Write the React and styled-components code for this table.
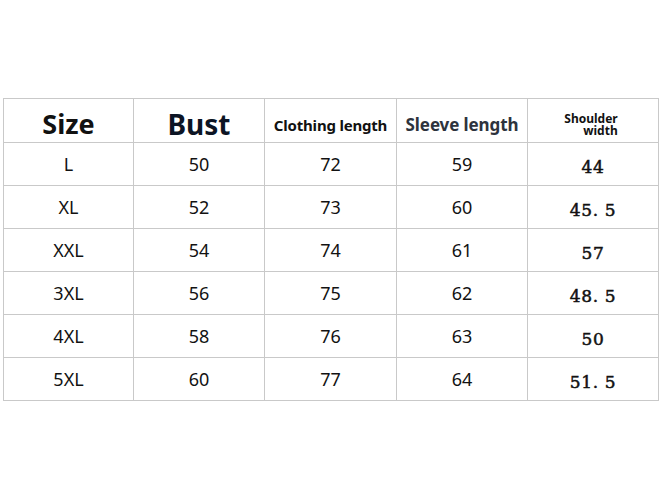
import styled, { createGlobalStyle } from 'styled-components';

const GlobalStyle = createGlobalStyle`
  html, body {
    margin: 0;
    padding: 0;
    background: #fff;
  }
  body {
    font-family: "Noto Sans", "Open Sans", sans-serif;
  }
`;

const Page = styled.div`
  width: 660px;
  height: 500px;
  padding: 98px 0 0 3px;
  box-sizing: border-box;
`;

const Table = styled.div`
  display: grid;
  grid-template-columns: 130px 131px 132px 131px 131px;
  grid-template-rows: 44px repeat(6, 43px);
  border-top: 1px solid #c9c9c9;
  border-left: 1px solid #c9c9c9;
  width: max-content;
`;

const Cell = styled.div`
  display: flex;
  align-items: center;
  justify-content: center;
  border-right: 1px solid #c9c9c9;
  border-bottom: 1px solid #c9c9c9;
  color: #121212;
  font-family: ${p => (p.$serif ? '"DejaVu Serif", "Liberation Serif", serif' : '"Noto Sans", "Open Sans", sans-serif')};
  font-size: ${p => (p.$serif ? '17px' : '18px')};
  font-weight: 400;
  -webkit-text-stroke: ${p => (p.$serif ? '0.5px #121212' : '0')};
  letter-spacing: ${p => (p.$serif ? '0.6px' : '0')};
  padding-top: ${p => (p.$serif ? '5px' : '0')};
  box-sizing: border-box;
  white-space: pre;
`;

const HeadCell = styled(Cell)`
  font-family: "Noto Sans", "Open Sans", sans-serif;
  font-weight: 700;
  font-size: ${p => p.$size};
  color: ${p => p.$color || '#111'};
  letter-spacing: ${p => p.$spacing || '0'};
  padding-top: ${p => p.$top || '0'};
`;

const Stack = styled.div`
  display: flex;
  flex-direction: column;
  align-items: flex-end;
  font-size: 12px;
  font-weight: 700;
  margin-left: -4px;
`;

const Line = styled.span`
  display: block;
  height: 12px;
  line-height: 12px;
`;

const rows = [
  ['L', '50', '72', '59', '44'],
  ['XL', '52', '73', '60', '45. 5'],
  ['XXL', '54', '74', '61', '57'],
  ['3XL', '56', '75', '62', '48. 5'],
  ['4XL', '58', '76', '63', '50'],
  ['5XL', '60', '77', '64', '51. 5'],
];

export default function App() {
  return (
    <>
      <GlobalStyle />
      <Page>
        <Table>
          <HeadCell $size="27px" $top="6px">Size</HeadCell>
          <HeadCell $size="28px" $color="#0c1424" $top="6px">Bust</HeadCell>
          <HeadCell $size="15px" $spacing="-0.2px" $top="8px">Clothing length</HeadCell>
          <HeadCell $size="17px" $color="#2d333d" $spacing="-0.1px" $top="8px">Sleeve length</HeadCell>
          <HeadCell $size="12px" $top="9px">
            <Stack>
              <Line>Shoulder</Line>
              <Line>width</Line>
            </Stack>
          </HeadCell>
          {rows.map(r =>
            r.map((v, i) => (
              <Cell key={r[0] + i} $serif={i === 4}>
                {v}
              </Cell>
            ))
          )}
        </Table>
      </Page>
    </>
  );
}
